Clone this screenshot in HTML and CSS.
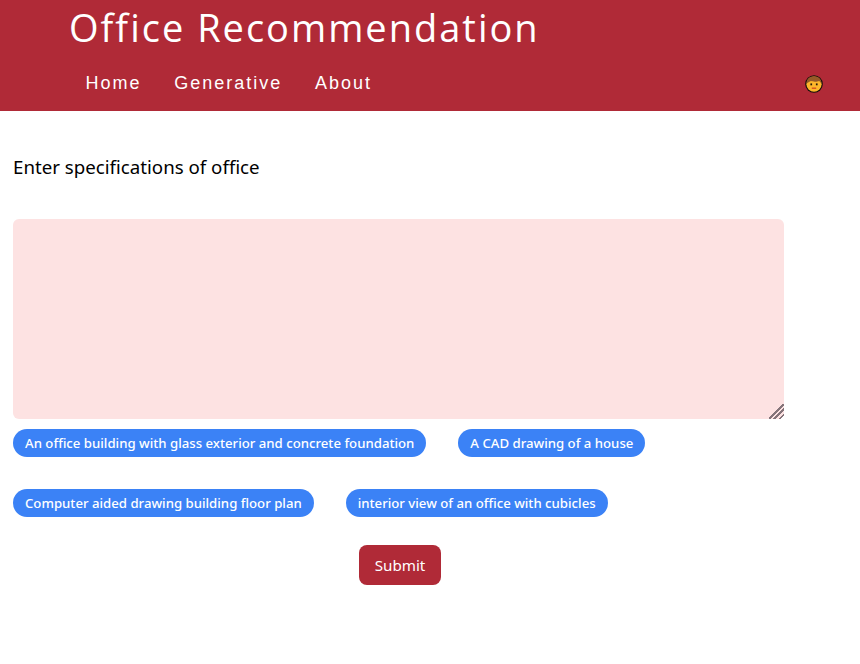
FILE: index.html
```html
<!DOCTYPE html>
<html lang="en">
<head>
<meta charset="utf-8">
<title>Office Recommendation</title>
<link rel="stylesheet" href="styles.css">
</head>
<body>
<header class="header">
  <h1 class="title">Office Recommendation</h1>
  <nav class="nav">
    <ul class="nav-links">
      <li><a href="#">Home</a></li>
      <li><a href="#">Generative</a></li>
      <li><a href="#">About</a></li>
    </ul>
    <svg class="avatar" width="18" height="18" viewBox="0 0 18 18" aria-hidden="true">
      <circle cx="9" cy="9" r="8.8" fill="#14100a"/>
      <circle cx="9" cy="9.200" r="7.600" fill="#fdb62b"/>
      <path d="M1.500 9C1.200 4 4.800 1.300 9 1.300s7.800 2.700 7.500 7.700c-.7-1.300-1.400-2.300-2.300-3-1.800.9-6.200 1-8.200.1C4.800 6.800 2.200 7.800 1.500 9z" fill="#965a28"/>
      <rect x="5.400" y="8.400" width="1.700" height="1.900" fill="#2a1a0a"/>
      <rect x="10.900" y="8.400" width="1.700" height="1.900" fill="#2a1a0a"/>
      <path d="M6.800 13.200h4.400" stroke="#d4481c" stroke-width="1.300" fill="none"/>
    </svg>
  </nav>
</header>
<main class="main">
  <p class="prompt">Enter specifications of office</p>
  <form class="form">
    <textarea class="spec"></textarea>
    <div class="chips">
      <button type="button" class="chip">An office building with glass exterior and concrete foundation</button>
      <button type="button" class="chip">A CAD drawing of a house</button>
      <button type="button" class="chip">Computer aided drawing building floor plan</button>
      <button type="button" class="chip">interior view of an office with cubicles</button>
    </div>
    <div class="actions">
      <button type="submit" class="submit">Submit</button>
    </div>
  </form>
</main>
</body>
</html>
```

FILE: styles.css
```css
* { box-sizing: border-box; }
html, body { margin: 0; padding: 0; background: #fff; }
body { font-family: "Noto Sans", "Open Sans", sans-serif; color: #000; height: 664px; overflow: hidden; }
.header { background: #b02a37; height: 111px; color: #fff; }
.title { margin: 0; padding: 1px 0 0 69px; height: 55px; font-size: 38px; line-height: 52px; font-weight: 400; letter-spacing: 2px; font-family: "Open Sans", sans-serif; }
.nav { display: flex; align-items: center; justify-content: space-between; padding: 0 37px 0 85.500px; height: 55px; }
.nav-links { display: flex; gap: 32.750px; margin: 0; padding: 0; list-style: none; }
.nav-links a { color: #fff; text-decoration: none; font-family: "Liberation Sans", Arial, sans-serif; font-size: 18px; letter-spacing: 2px; }
.avatar { display: block; margin-top: 3px; }
.main { padding: 0 13px; }
.prompt { margin: 0; padding-top: 43px; font-size: 18.700px; line-height: 26px; height: 108px; }
.form { width: 771px; }
.spec { display: block; width: 771px; height: 200px; background: #fde2e2; border: 0; border-radius: 6px; resize: vertical; outline: none; }
.spec::-webkit-resizer {
  background: linear-gradient(135deg, transparent 0 9.800px, #85747a 9.800px 11.600px, transparent 11.600px 13.400px, #85747a 13.400px 15.200px, transparent 15.200px 17px, #85747a 17px 18.800px, transparent 18.800px);
}
.chips { display: flex; flex-wrap: wrap; gap: 32px; width: 640px; padding-top: 10px; }
.chip { height: 28px; padding: 0 12px; border: 0; border-radius: 14px; background: #3b82f6; color: #fff; font-family: "Noto Sans", sans-serif; font-size: 13.200px; font-weight: 500; white-space: nowrap; }
.actions { display: flex; justify-content: center; padding: 28px 0 0 3px; }
.submit { width: 82px; height: 40px; border: 0; border-radius: 8px; background: #b02a37; color: #fff; font-family: "Noto Sans", sans-serif; font-size: 15.200px; }
```
